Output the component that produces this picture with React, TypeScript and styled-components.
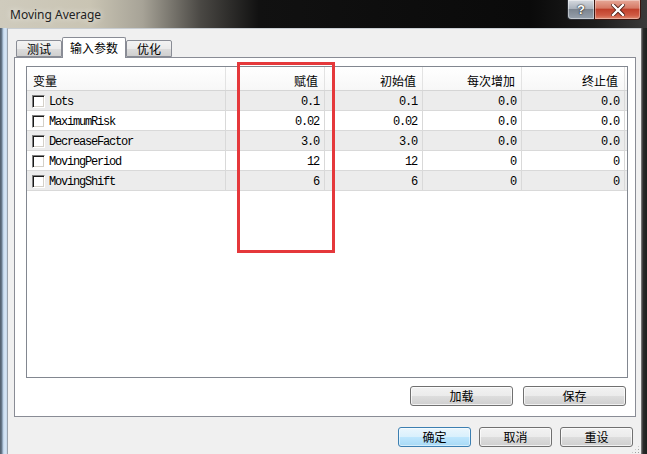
import React from "react";
import styled, { createGlobalStyle } from "styled-components";

const GlobalStyle = createGlobalStyle`
  html, body { margin: 0; padding: 0; background: #000; overflow: hidden; }
  #root { width: 647px; height: 454px; }
`;

const CJK = `"Noto Sans CJK SC", "Noto Sans", sans-serif`;
const MONO = `"Liberation Mono", "DejaVu Sans Mono", monospace`;

const Root = styled.div`
  position: relative;
  width: 647px;
  height: 454px;
  display: flex;
  flex-direction: column;
  overflow: hidden;
  background: #000;
`;

const TitleBar = styled.div`
  height: 28px;
  flex: none;
  display: flex;
  align-items: flex-start;
  background: linear-gradient(
    to right,
    #cfcbbd 0%,
    #c9c4b3 14%,
    #a7a397 22%,
    #4a4844 31%,
    #111 40%,
    #0a0a0a 82%,
    #1c1c1c 92%,
    #3a3a3a 100%
  );
`;

const TitleText = styled.div`
  padding: 7px 0 0 10px;
  font-family: "Noto Sans", "Open Sans", sans-serif;
  font-size: 12px;
  line-height: 16px;
  color: #222;
  text-shadow: 0 0 6px rgba(255, 255, 255, 0.8);
`;

const CaptionButtons = styled.div`
  margin-left: auto;
  margin-right: 6px;
  display: flex;
`;

const HelpButton = styled.div`
  width: 26px;
  height: 19px;
  border: 1px solid #2a2d33;
  border-top: none;
  border-right: none;
  border-bottom-left-radius: 4px;
  background: linear-gradient(to bottom, #d6dae0 0%, #aab2bc 45%, #7c8590 50%, #97a1ad 100%);
  box-shadow: inset 0 0 0 1px rgba(255, 255, 255, 0.45);
  color: #fff;
  font-family: "Liberation Sans", sans-serif;
  font-weight: bold;
  font-size: 13px;
  line-height: 19px;
  text-align: center;
  text-shadow: 0 0 2px #222, 0 0 1px #000;
`;

const CloseButton = styled.div`
  width: 45px;
  height: 19px;
  border: 1px solid #3a1510;
  border-top: none;
  border-bottom-right-radius: 4px;
  background: linear-gradient(to bottom, #e6a898 0%, #d67a66 42%, #c1412c 50%, #cf5a44 80%, #e08a70 100%);
  box-shadow: inset 0 0 0 1px rgba(255, 255, 255, 0.35);
  display: flex;
  align-items: center;
  justify-content: center;
`;

const Body = styled.div`
  flex: 1;
  display: flex;
  min-height: 0;
`;

const LeftFrame = styled.div`
  width: 7px;
  flex: none;
  background: linear-gradient(to right, #4d5a68 0, #6d7f92 2px, #b7cde4 3px, #d9e8f6 5px, #c4d6ea 7px);
`;

const RightFrame = styled.div`
  width: 6px;
  flex: none;
  background: linear-gradient(to right, #8c8c8c 0, #5a5a5a 1px, #2c2c2c 2px, #1a1f1c 6px);
`;

const Client = styled.div`
  flex: 1;
  display: flex;
  flex-direction: column;
  background: #f0f0f0;
  border-left: 1px solid #9aa3ad;
  border-top: 1px solid #c8cdd2;
  padding: 7px 5px 0 6px;
`;

const TabStrip = styled.div`
  display: flex;
  align-items: flex-end;
  height: 21px;
  padding-left: 2px;
  position: relative;
  z-index: 1;
`;

const Tab = styled.div<{ $active?: boolean }>`
  height: ${(p) => (p.$active ? "21px" : "17px")};
  padding: 0 ${(p) => (p.$active ? "7px" : "10px")};
  margin-bottom: ${(p) => (p.$active ? "-1px" : "0")};
  border: 1px solid #898c95;
  border-bottom: ${(p) => (p.$active ? "none" : "1px solid #898c95")};
  border-radius: 2px 2px 0 0;
  box-sizing: border-box;
  background: ${(p) =>
    p.$active ? "#fff" : "linear-gradient(to bottom, #f3f3f3 0%, #ebebeb 50%, #dddddd 51%, #cfcfcf 100%)"};
  font-family: ${CJK};
  font-size: 12px;
  line-height: ${(p) => (p.$active ? "20px" : "15px")};
  color: #000;
  white-space: nowrap;
`;

const TabPanel = styled.div`
  height: 360px;
  box-sizing: border-box;
  border: 1px solid #898c95;
  background: #fff;
  padding: 8px 7px 10px 11px;
  display: flex;
  flex-direction: column;
`;

const ListBox = styled.div`
  height: 312px;
  box-sizing: border-box;
  border: 1px solid #828790;
  background: #fff;
  flex: none;
`;

const GridRow = styled.div<{ $shaded?: boolean; $header?: boolean }>`
  display: grid;
  grid-template-columns: 199px 99px 98px 99px 103px;
  height: ${(p) => (p.$header ? "24px" : "20px")};
  box-sizing: border-box;
  border-bottom: 1px solid ${(p) => (p.$header ? "#d5d5d5" : "#d9d9d9")};
  background: ${(p) =>
    p.$header ? "linear-gradient(to bottom, #ffffff, #f7f7f7)" : p.$shaded ? "#ececec" : "#ffffff"};
`;

const HeaderCell = styled.div<{ $left?: boolean }>`
  border-right: 1px solid #e3e3e3;
  display: flex;
  align-items: center;
  justify-content: ${(p) => (p.$left ? "flex-start" : "flex-end")};
  padding: 3px 6px 0 ${(p) => (p.$left ? "6px" : "0")};
  font-family: ${CJK};
  font-size: 12px;
  color: #000;
  white-space: nowrap;
`;

const Cell = styled.div<{ $left?: boolean }>`
  border-right: 1px solid #d9d9d9;
  display: flex;
  align-items: center;
  justify-content: ${(p) => (p.$left ? "flex-start" : "flex-end")};
  padding: 1px 5px 0 ${(p) => (p.$left ? "5px" : "0")};
  font-family: ${MONO};
  font-size: 12px;
  letter-spacing: -1.2px;
  color: #000;
  white-space: nowrap;
`;

const Label = styled.span`
  padding-top: 2px;
`;

const CheckBox = styled.span`
  width: 13px;
  height: 13px;
  box-sizing: border-box;
  flex: none;
  margin-right: 4px;
  background: #fff;
  border: 1px solid;
  border-color: #808080 #ffffff #ffffff #808080;
  box-shadow: inset 1px 1px 0 #1a1a1a, inset -1px -1px 0 #d4d0c8;
`;

const ButtonRow = styled.div<{ $gap: number; $right: number; $top: number }>`
  display: flex;
  justify-content: flex-end;
  gap: ${(p) => p.$gap}px;
  margin-top: ${(p) => p.$top}px;
  margin-right: ${(p) => p.$right}px;
`;

const Button = styled.div<{ $w: number; $default?: boolean }>`
  width: ${(p) => p.$w}px;
  height: 20px;
  box-sizing: border-box;
  border: 1px solid ${(p) => (p.$default ? "#3c7fb1" : "#707070")};
  border-radius: 3px;
  background: ${(p) =>
    p.$default
      ? "linear-gradient(to bottom, #eaf6fd 0%, #d9f0fc 50%, #bee6fd 51%, #a7d9f5 100%)"
      : "linear-gradient(to bottom, #f2f2f2 0%, #ebebeb 50%, #dddddd 51%, #cfcfcf 100%)"};
  box-shadow: inset 0 0 0 1px ${(p) => (p.$default ? "rgba(255,255,255,0.5)" : "rgba(255,255,255,0.7)")};
  font-family: ${CJK};
  font-size: 12px;
  line-height: 18px;
  text-align: center;
  color: #000;
`;

const Highlight = styled.div`
  position: absolute;
  left: 237px;
  top: 62px;
  width: 98px;
  height: 191px;
  box-sizing: border-box;
  border: 3px solid #e5383b;
  pointer-events: none;
`;

const SizeGrip = styled.div`
  position: absolute;
  right: 7px;
  bottom: 0;
  width: 9px;
  height: 9px;
  background-image: radial-gradient(circle, #a0a0a0 0.8px, transparent 1px);
  background-size: 3px 3px;
  clip-path: polygon(100% 0, 100% 100%, 0 100%);
`;

type Param = { name: string; value: string; start: string; step: string; stop: string };

const params: Param[] = [
  { name: "Lots", value: "0.1", start: "0.1", step: "0.0", stop: "0.0" },
  { name: "MaximumRisk", value: "0.02", start: "0.02", step: "0.0", stop: "0.0" },
  { name: "DecreaseFactor", value: "3.0", start: "3.0", step: "0.0", stop: "0.0" },
  { name: "MovingPeriod", value: "12", start: "12", step: "0", stop: "0" },
  { name: "MovingShift", value: "6", start: "6", step: "0", stop: "0" },
];

export default function App() {
  return (
    <>
      <GlobalStyle />
      <Root>
        <TitleBar>
          <TitleText>Moving Average</TitleText>
          <CaptionButtons>
            <HelpButton>?</HelpButton>
            <CloseButton>
              <svg width="14" height="12" viewBox="0 0 14 12">
                <path d="M2 1 L12 11 M12 1 L2 11" stroke="#4a1a12" strokeWidth="4" strokeLinecap="square" />
                <path d="M2 1 L12 11 M12 1 L2 11" stroke="#ffffff" strokeWidth="2.4" strokeLinecap="square" />
              </svg>
            </CloseButton>
          </CaptionButtons>
        </TitleBar>
        <Body>
          <LeftFrame />
          <Client>
            <TabStrip>
              <Tab>测试</Tab>
              <Tab $active>输入参数</Tab>
              <Tab>优化</Tab>
            </TabStrip>
            <TabPanel>
              <ListBox>
                <GridRow $header>
                  <HeaderCell $left>变量</HeaderCell>
                  <HeaderCell>赋值</HeaderCell>
                  <HeaderCell>初始值</HeaderCell>
                  <HeaderCell>每次增加</HeaderCell>
                  <HeaderCell>终止值</HeaderCell>
                </GridRow>
                {params.map((p, i) => (
                  <GridRow key={p.name} $shaded={i % 2 === 0}>
                    <Cell $left>
                      <CheckBox />
                      <Label>{p.name}</Label>
                    </Cell>
                    <Cell>
                      <Label>{p.value}</Label>
                    </Cell>
                    <Cell>
                      <Label>{p.start}</Label>
                    </Cell>
                    <Cell>
                      <Label>{p.step}</Label>
                    </Cell>
                    <Cell>
                      <Label>{p.stop}</Label>
                    </Cell>
                  </GridRow>
                ))}
              </ListBox>
              <ButtonRow $gap={10} $right={2} $top={8}>
                <Button $w={103}>加载</Button>
                <Button $w={103}>保存</Button>
              </ButtonRow>
            </TabPanel>
            <ButtonRow $gap={8} $right={3} $top={10}>
              <Button $w={73} $default>
                确定
              </Button>
              <Button $w={73}>取消</Button>
              <Button $w={73}>重设</Button>
            </ButtonRow>
          </Client>
          <RightFrame />
        </Body>
        <Highlight />
        <SizeGrip />
      </Root>
    </>
  );
}
